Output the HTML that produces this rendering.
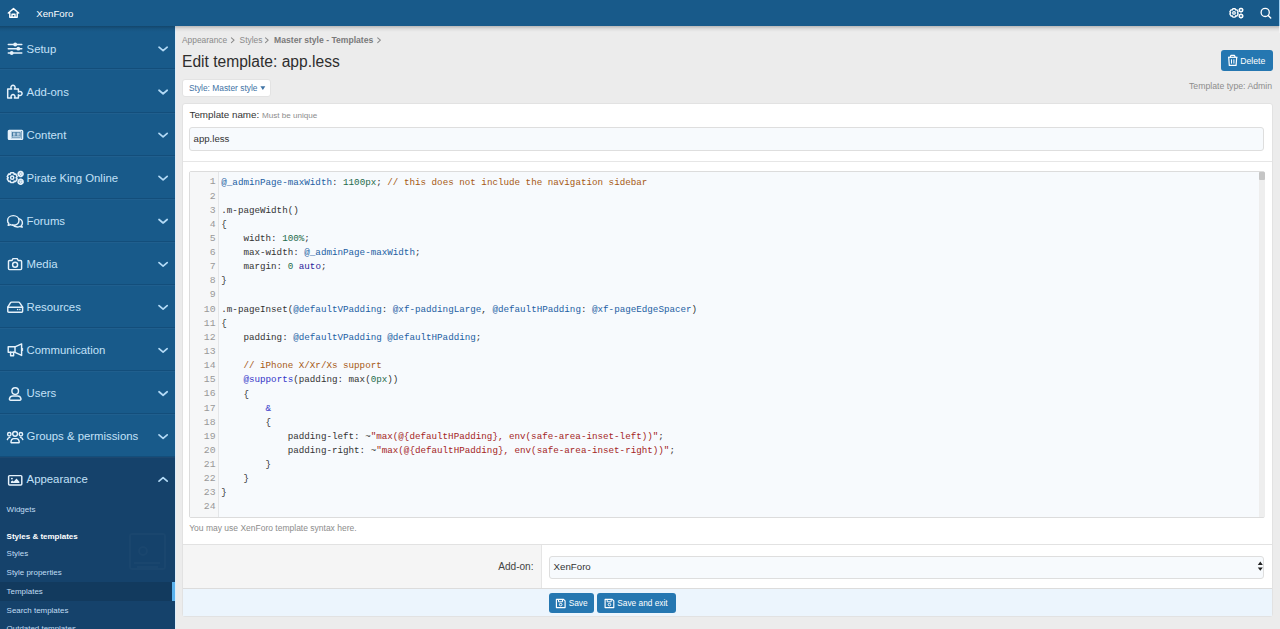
<!DOCTYPE html><html><head><meta charset="utf-8"><title>Edit template: app.less</title><style>
html,body{margin:0;padding:0;width:1280px;height:629px;overflow:hidden;background:#ececec;font-family:"Liberation Sans", sans-serif}
.t{position:absolute;white-space:pre;font-family:"Liberation Sans", sans-serif}.r{position:absolute;box-sizing:border-box}svg{position:absolute;overflow:visible}
.cm{position:absolute;white-space:pre;font-family:"Liberation Mono", monospace;color:#333}.ln{position:absolute;font-family:"Liberation Mono", monospace;color:#999;text-align:right;white-space:pre}
.cm i{font-style:normal;color:#2360a3}.cm b{font-weight:400;color:#1e6b4c}.cm u{text-decoration:none;color:#a65914}.cm s{text-decoration:none;color:#a42424}.cm q{color:#2b219a}.cm q:before,.cm q:after{content:none}.cm em{font-style:normal;color:#3434c8}
</style></head><body>
<div class="r" style="left:0px;top:26px;width:175px;height:603px;background:#185a8a"></div>
<div class="r" style="left:175px;top:26px;width:1px;height:603px;background:#dcedfa"></div>
<div class="r" style="left:0px;top:457px;width:175px;height:172px;background:#15426b"></div>
<div class="r" style="left:0px;top:68.47px;width:175px;height:1px;background:#134e7b"></div>
<div class="r" style="left:0px;top:69.47px;width:175px;height:1px;background:rgba(255,255,255,0.035)"></div>
<div class="r" style="left:0px;top:111.54px;width:175px;height:1px;background:#134e7b"></div>
<div class="r" style="left:0px;top:112.54px;width:175px;height:1px;background:rgba(255,255,255,0.035)"></div>
<div class="r" style="left:0px;top:154.61px;width:175px;height:1px;background:#134e7b"></div>
<div class="r" style="left:0px;top:155.61px;width:175px;height:1px;background:rgba(255,255,255,0.035)"></div>
<div class="r" style="left:0px;top:197.68px;width:175px;height:1px;background:#134e7b"></div>
<div class="r" style="left:0px;top:198.68px;width:175px;height:1px;background:rgba(255,255,255,0.035)"></div>
<div class="r" style="left:0px;top:240.75px;width:175px;height:1px;background:#134e7b"></div>
<div class="r" style="left:0px;top:241.75px;width:175px;height:1px;background:rgba(255,255,255,0.035)"></div>
<div class="r" style="left:0px;top:283.82px;width:175px;height:1px;background:#134e7b"></div>
<div class="r" style="left:0px;top:284.82px;width:175px;height:1px;background:rgba(255,255,255,0.035)"></div>
<div class="r" style="left:0px;top:326.89px;width:175px;height:1px;background:#134e7b"></div>
<div class="r" style="left:0px;top:327.89px;width:175px;height:1px;background:rgba(255,255,255,0.035)"></div>
<div class="r" style="left:0px;top:369.96px;width:175px;height:1px;background:#134e7b"></div>
<div class="r" style="left:0px;top:370.96px;width:175px;height:1px;background:rgba(255,255,255,0.035)"></div>
<div class="r" style="left:0px;top:413.03px;width:175px;height:1px;background:#134e7b"></div>
<div class="r" style="left:0px;top:414.03px;width:175px;height:1px;background:rgba(255,255,255,0.035)"></div>
<div class="r" style="left:0px;top:456.1px;width:175px;height:1px;background:#134e7b"></div>
<div class="r" style="left:0px;top:457.1px;width:175px;height:1px;background:rgba(255,255,255,0.035)"></div>
<div class="t" style="left:26.6px;top:41.77px;font-size:11.35px;line-height:14.19px;color:#c3e1f8;font-weight:400;">Setup</div>
<div class="t" style="left:26.6px;top:84.84px;font-size:11.35px;line-height:14.19px;color:#c3e1f8;font-weight:400;">Add-ons</div>
<div class="t" style="left:26.6px;top:127.91px;font-size:11.35px;line-height:14.19px;color:#c3e1f8;font-weight:400;">Content</div>
<div class="t" style="left:26.6px;top:170.98px;font-size:11.35px;line-height:14.19px;color:#c3e1f8;font-weight:400;">Pirate King Online</div>
<div class="t" style="left:26.6px;top:214.05px;font-size:11.35px;line-height:14.19px;color:#c3e1f8;font-weight:400;">Forums</div>
<div class="t" style="left:26.6px;top:257.12px;font-size:11.35px;line-height:14.19px;color:#c3e1f8;font-weight:400;">Media</div>
<div class="t" style="left:26.6px;top:300.19px;font-size:11.35px;line-height:14.19px;color:#c3e1f8;font-weight:400;">Resources</div>
<div class="t" style="left:26.6px;top:343.26px;font-size:11.35px;line-height:14.19px;color:#c3e1f8;font-weight:400;">Communication</div>
<div class="t" style="left:26.6px;top:386.33px;font-size:11.35px;line-height:14.19px;color:#c3e1f8;font-weight:400;">Users</div>
<div class="t" style="left:26.6px;top:429.40px;font-size:11.35px;line-height:14.19px;color:#c3e1f8;font-weight:400;">Groups &amp; permissions</div>
<div class="t" style="left:26.6px;top:472.47px;font-size:11.35px;line-height:14.19px;color:#c3e1f8;font-weight:400;">Appearance</div>
<div class="r" style="left:0px;top:582px;width:175px;height:19px;background:#123a5e"></div>
<div class="r" style="left:172px;top:582px;width:3px;height:19px;background:#5cb3ee"></div>
<div class="t" style="left:6.6px;top:505.23px;font-size:8.0px;line-height:10.0px;color:#c0ddf3;font-weight:400;">Widgets</div>
<div class="t" style="left:6.6px;top:532.43px;font-size:8.0px;line-height:10.0px;color:#ffffff;font-weight:700;">Styles &amp; templates</div>
<div class="t" style="left:6.6px;top:549.48px;font-size:7.95px;line-height:9.94px;color:#c0ddf3;font-weight:400;">Styles</div>
<div class="t" style="left:6.6px;top:568.18px;font-size:7.95px;line-height:9.94px;color:#c0ddf3;font-weight:400;">Style properties</div>
<div class="t" style="left:6.6px;top:587.08px;font-size:7.95px;line-height:9.94px;color:#c0ddf3;font-weight:400;">Templates</div>
<div class="t" style="left:6.6px;top:605.68px;font-size:7.95px;line-height:9.94px;color:#c0ddf3;font-weight:400;">Search templates</div>
<div class="t" style="left:6.6px;top:624.38px;font-size:7.95px;line-height:9.94px;color:#c0ddf3;font-weight:400;">Outdated templates</div>
<svg style="left:0px;top:0px" width="1" height="1" viewBox="0 0 1 1" ><g fill="none" stroke="rgba(255,255,255,0.025)" stroke-width="2"><rect x="130" y="534" width="35" height="35" rx="2"/><circle cx="143" cy="551" r="4"/><path d="M134 563H160M137 567H158"/></g></svg>
<svg style="left:4px;top:38.00px" width="22" height="22" viewBox="0 0 22 22" fill="none" stroke="#e6f2fb" stroke-width="1.45" stroke-linecap="round" stroke-linejoin="round"><path d="M4.3 6.5H17.8M4.3 10.7H17.8M4.3 15H17.8" stroke-width="1.5"/><circle cx="11.2" cy="6.5" r="1.9" fill="#e6f2fb" stroke="none"/><circle cx="14.3" cy="10.7" r="1.9" fill="#e6f2fb" stroke="none"/><circle cx="7.7" cy="15" r="1.9" fill="#e6f2fb" stroke="none"/></svg>
<svg style="left:4px;top:81.07px" width="22" height="22" viewBox="0 0 22 22" fill="none" stroke="#e6f2fb" stroke-width="1.5" stroke-linecap="round" stroke-linejoin="round"><path d="M3.7 8H7.6A2.1 2.1 0 1 1 10.4 8H14.4V11.1A2.1 2.1 0 1 1 14.4 13.9V17H10.4A2 2 0 1 0 7.6 17H3.7Z"/></svg>
<svg style="left:4px;top:124.14px" width="22" height="22" viewBox="0 0 22 22" fill="none" stroke="#e6f2fb" stroke-width="1.45" stroke-linecap="round" stroke-linejoin="round"><rect x="4.4" y="6.5" width="14.2" height="8.8" rx="0.8" stroke-width="1.4"/><rect x="4.4" y="6.5" width="2.7" height="8.8" fill="#e6f2fb" stroke="none"/><rect x="7.6" y="7.7" width="9.4" height="6.5" stroke-width="1"/><rect x="8.7" y="8.6" width="2.9" height="3.2" fill="#e6f2fb" stroke="none" opacity=".75"/><rect x="12.5" y="8.6" width="3.3" height="3.2" fill="#e6f2fb" stroke="none" opacity=".75"/><path d="M8.7 12.8H15.8" stroke-width="1"/></svg>
<svg style="left:4px;top:167.21px" width="22" height="22" viewBox="0 0 22 22" fill="none" stroke="#e6f2fb" stroke-width="1.5" stroke-linecap="round" stroke-linejoin="round"><path d="M6.03 7.34L6.70 5.83L9.70 5.83L10.37 7.34L10.03 7.14L11.67 6.96L13.17 9.56L12.20 10.89L12.20 10.51L13.17 11.84L11.67 14.44L10.03 14.26L10.37 14.06L9.70 15.57L6.70 15.57L6.03 14.06L6.37 14.26L4.73 14.44L3.23 11.84L4.20 10.51L4.20 10.89L3.23 9.56L4.73 6.96L6.37 7.14Z"/><circle cx="8.2" cy="10.7" r="1.6"/><path d="M15.52 5.22L15.84 4.41L17.36 4.41L17.68 5.22L17.51 5.12L18.37 5.00L19.13 6.32L18.60 7.00L18.60 6.80L19.13 7.48L18.37 8.80L17.51 8.68L17.68 8.58L17.36 9.39L15.84 9.39L15.52 8.58L15.69 8.68L14.83 8.80L14.07 7.48L14.60 6.80L14.60 7.00L14.07 6.32L14.83 5.00L15.69 5.12Z"/><circle cx="16.6" cy="6.9" r="0.6"/><path d="M15.52 13.02L15.84 12.21L17.36 12.21L17.68 13.02L17.51 12.92L18.37 12.80L19.13 14.12L18.60 14.80L18.60 14.60L19.13 15.28L18.37 16.60L17.51 16.48L17.68 16.38L17.36 17.19L15.84 17.19L15.52 16.38L15.69 16.48L14.83 16.60L14.07 15.28L14.60 14.60L14.60 14.80L14.07 14.12L14.83 12.80L15.69 12.92Z"/><circle cx="16.6" cy="14.7" r="0.6"/></svg>
<svg style="left:4px;top:210.28px" width="22" height="22" viewBox="0 0 22 22" fill="none" stroke="#e6f2fb" stroke-width="1.45" stroke-linecap="round" stroke-linejoin="round"><path d="M4.8 13.3C3.8 12.5 3.6 11.4 3.6 10.4C3.6 7.6 6.2 5.6 9.3 5.6C12.4 5.6 15 7.6 15 10.4C15 13.2 12.4 15.2 9.3 15.2C8.3 15.2 7.3 15 6.5 14.6C5.8 15 4.9 15.3 4.1 15.2C4.6 14.7 4.8 14 4.8 13.3Z"/><path d="M14.6 8.6C16.9 9.2 18.4 10.9 18.4 12.9C18.4 13.9 18.1 14.8 17.4 15.4C17.5 16.1 17.8 16.6 18.3 17C17.4 17.1 16.6 16.8 16 16.4C15.2 16.8 14.3 17 13.3 17C11.3 17 9.6 16.2 8.7 14.9"/></svg>
<svg style="left:4px;top:253.35px" width="22" height="22" viewBox="0 0 22 22" fill="none" stroke="#e6f2fb" stroke-width="1.45" stroke-linecap="round" stroke-linejoin="round"><path d="M5.5 7.5H8L9 5.6H13.2L14.2 7.5H16.6C17.2 7.5 17.6 7.9 17.6 8.5V15.6C17.6 16.2 17.2 16.6 16.6 16.6H5.5C4.9 16.6 4.5 16.2 4.5 15.6V8.5C4.5 7.9 4.9 7.5 5.5 7.5Z"/><circle cx="11.1" cy="11.7" r="2.5"/></svg>
<svg style="left:4px;top:296.42px" width="22" height="22" viewBox="0 0 22 22" fill="none" stroke="#e6f2fb" stroke-width="1.45" stroke-linecap="round" stroke-linejoin="round"><path d="M3.8 11.2L6.4 6.8C6.7 6.3 7.1 6.1 7.6 6.1H14.6C15.1 6.1 15.5 6.3 15.8 6.8L18.6 11.2V15.3C18.6 15.8 18.2 16.2 17.7 16.2H4.7C4.2 16.2 3.8 15.8 3.8 15.3Z"/><path d="M3.8 11.2H18.6"/><circle cx="13.6" cy="13.5" r="0.75" fill="#e6f2fb" stroke="none"/><circle cx="15.9" cy="13.5" r="0.75" fill="#e6f2fb" stroke="none"/></svg>
<svg style="left:4px;top:339.49px" width="22" height="22" viewBox="0 0 22 22" fill="none" stroke="#e6f2fb" stroke-width="1.45" stroke-linecap="round" stroke-linejoin="round"><path d="M4.2 7.8H11L17.6 4.9V16.4L11 13.3H4.2Z"/><path d="M11 7.8V13.3"/><path d="M6.6 13.3V16.8H9.6V13.3"/><path d="M18.6 9.4V11.6" stroke-width="1"/></svg>
<svg style="left:4px;top:382.56px" width="22" height="22" viewBox="0 0 22 22" fill="none" stroke="#e6f2fb" stroke-width="1.45" stroke-linecap="round" stroke-linejoin="round"><circle cx="11.2" cy="8.1" r="3.3"/><path d="M6.6 17.2H15.8C16.6 17.2 17.1 16.6 17 15.8C16.6 13.9 15.2 12.9 13.6 12.9H8.8C7.2 12.9 5.8 13.9 5.4 15.8C5.3 16.6 5.8 17.2 6.6 17.2Z"/></svg>
<svg style="left:4px;top:425.63px" width="22" height="22" viewBox="0 0 22 22" fill="none" stroke="#e6f2fb" stroke-width="1.45" stroke-linecap="round" stroke-linejoin="round"><circle cx="11.1" cy="7.8" r="2.4"/><circle cx="5.3" cy="8.2" r="1.7"/><circle cx="16.9" cy="8.2" r="1.7"/><path d="M7.7 16.7H14.5C15 16.7 15.3 16.3 15.2 15.8C15 13.8 14 12.6 12.6 12.6H9.6C8.2 12.6 7.2 13.8 7 15.8C6.9 16.3 7.2 16.7 7.7 16.7Z"/><path d="M3.4 13.6C3.8 12.4 4.6 11.5 5.8 11.4M18.8 13.6C18.4 12.4 17.6 11.5 16.4 11.4"/></svg>
<svg style="left:4px;top:468.70px" width="22" height="22" viewBox="0 0 22 22" fill="none" stroke="#e6f2fb" stroke-width="1.45" stroke-linecap="round" stroke-linejoin="round"><rect x="4.6" y="6.6" width="13.2" height="9.3" rx="1"/><path d="M6.9 14.1V12.4L8.3 11.4L9.8 12.4L12.5 9.6L15.4 12.7V14.1Z" fill="#e6f2fb" stroke="none"/><circle cx="7.9" cy="9.6" r="0.95" fill="#e6f2fb" stroke="none"/></svg>
<svg style="left:0;top:0" width="1" height="1"><path d="M159 47.20L163.1 50.70L167.2 47.20" fill="none" stroke="#b3daf6" stroke-width="1.7" stroke-linecap="round" stroke-linejoin="round"/></svg>
<svg style="left:0;top:0" width="1" height="1"><path d="M159 90.27L163.1 93.77L167.2 90.27" fill="none" stroke="#b3daf6" stroke-width="1.7" stroke-linecap="round" stroke-linejoin="round"/></svg>
<svg style="left:0;top:0" width="1" height="1"><path d="M159 133.34L163.1 136.84L167.2 133.34" fill="none" stroke="#b3daf6" stroke-width="1.7" stroke-linecap="round" stroke-linejoin="round"/></svg>
<svg style="left:0;top:0" width="1" height="1"><path d="M159 176.41L163.1 179.91L167.2 176.41" fill="none" stroke="#b3daf6" stroke-width="1.7" stroke-linecap="round" stroke-linejoin="round"/></svg>
<svg style="left:0;top:0" width="1" height="1"><path d="M159 219.48L163.1 222.98L167.2 219.48" fill="none" stroke="#b3daf6" stroke-width="1.7" stroke-linecap="round" stroke-linejoin="round"/></svg>
<svg style="left:0;top:0" width="1" height="1"><path d="M159 262.55L163.1 266.05L167.2 262.55" fill="none" stroke="#b3daf6" stroke-width="1.7" stroke-linecap="round" stroke-linejoin="round"/></svg>
<svg style="left:0;top:0" width="1" height="1"><path d="M159 305.62L163.1 309.12L167.2 305.62" fill="none" stroke="#b3daf6" stroke-width="1.7" stroke-linecap="round" stroke-linejoin="round"/></svg>
<svg style="left:0;top:0" width="1" height="1"><path d="M159 348.69L163.1 352.19L167.2 348.69" fill="none" stroke="#b3daf6" stroke-width="1.7" stroke-linecap="round" stroke-linejoin="round"/></svg>
<svg style="left:0;top:0" width="1" height="1"><path d="M159 391.76L163.1 395.26L167.2 391.76" fill="none" stroke="#b3daf6" stroke-width="1.7" stroke-linecap="round" stroke-linejoin="round"/></svg>
<svg style="left:0;top:0" width="1" height="1"><path d="M159 434.83L163.1 438.33L167.2 434.83" fill="none" stroke="#b3daf6" stroke-width="1.7" stroke-linecap="round" stroke-linejoin="round"/></svg>
<svg style="left:0;top:0" width="1" height="1"><path d="M159 481.10L163.1 477.60L167.2 481.10" fill="none" stroke="#b3daf6" stroke-width="1.7" stroke-linecap="round" stroke-linejoin="round"/></svg>
<div class="r" style="left:0px;top:0px;width:1280px;height:26px;background:#185a8a"></div>
<div class="r" style="left:0px;top:26px;width:1280px;height:6px;background:linear-gradient(rgba(0,0,0,.22),rgba(0,0,0,.06) 50%,rgba(0,0,0,0))"></div>
<div class="r" style="left:1278.7px;top:26px;width:1.3px;height:7px;background:#f2f2f2"></div>
<div class="r" style="left:1278.7px;top:0px;width:1.3px;height:26px;background:#9fd0f2"></div>
<div class="t" style="left:36.2px;top:7.78px;font-size:9.7px;line-height:12.12px;color:#ffffff;font-weight:400;">XenForo</div>
<svg style="left:0px;top:0px" width="1" height="1" viewBox="0 0 1 1" ><path d="M8.3 13L13.5 8.6L18.7 13M9.8 11.8V17.2H17.2V11.8M12 17.2V14.2H15V17.2" fill="none" stroke="#fff" stroke-width="1.4" stroke-linejoin="round" stroke-linecap="round"/></svg>
<svg style="left:0px;top:0px" width="1" height="1" viewBox="0 0 1 1" ><circle cx="1265.2" cy="12.4" r="4.1" fill="none" stroke="#fff" stroke-width="1.3"/><path d="M1268.2 15.4L1270.7 17.9" stroke="#fff" stroke-width="1.4" stroke-linecap="round"/></svg>
<svg style="left:0px;top:0px" width="1" height="1" viewBox="0 0 1 1" ><g fill="none" stroke="#fff" stroke-width="1.3" stroke-linejoin="round"><path d="M1232.25 9.99L1232.80 8.77L1235.20 8.77L1235.75 9.99L1235.65 9.92L1236.98 9.80L1238.18 11.87L1237.40 12.96L1237.40 12.84L1238.18 13.93L1236.98 16.00L1235.65 15.88L1235.75 15.81L1235.20 17.03L1232.80 17.03L1232.25 15.81L1232.35 15.88L1231.02 16.00L1229.82 13.93L1230.60 12.84L1230.60 12.96L1229.82 11.87L1231.02 9.80L1232.35 9.92Z"/><circle cx="1234.0" cy="12.9" r="1.3"/><path d="M1240.25 8.86L1240.47 8.28L1241.53 8.28L1241.75 8.86L1241.70 8.83L1242.32 8.73L1242.85 9.65L1242.45 10.13L1242.45 10.07L1242.85 10.55L1242.32 11.47L1241.70 11.37L1241.75 11.34L1241.53 11.92L1240.47 11.92L1240.25 11.34L1240.30 11.37L1239.68 11.47L1239.15 10.55L1239.55 10.07L1239.55 10.13L1239.15 9.65L1239.68 8.73L1240.30 8.83Z"/><path d="M1240.25 14.76L1240.47 14.18L1241.53 14.18L1241.75 14.76L1241.70 14.73L1242.32 14.63L1242.85 15.55L1242.45 16.03L1242.45 15.97L1242.85 16.45L1242.32 17.37L1241.70 17.27L1241.75 17.24L1241.53 17.82L1240.47 17.82L1240.25 17.24L1240.30 17.27L1239.68 17.37L1239.15 16.45L1239.55 15.97L1239.55 16.03L1239.15 15.55L1239.68 14.63L1240.30 14.73Z"/></g></svg>
<div class="t" style="left:182px;top:35.04px;font-size:8.4px;line-height:10.5px;color:#8a8a8a;font-weight:400;">Appearance</div>
<div class="t" style="left:239.6px;top:35.04px;font-size:8.4px;line-height:10.5px;color:#8a8a8a;font-weight:400;">Styles</div>
<div class="t" style="left:274.1px;top:34.85px;font-size:8.6px;line-height:10.75px;color:#7a7a7a;font-weight:700;">Master style - Templates</div>
<svg style="left:0px;top:0px" width="1" height="1" viewBox="0 0 1 1" ><path d="M231.4 37.8L234.1 40.2L231.4 42.6" fill="none" stroke="#8a8a8a" stroke-width="1.05" stroke-linecap="round" stroke-linejoin="round"/></svg>
<svg style="left:0px;top:0px" width="1" height="1" viewBox="0 0 1 1" ><path d="M265.5 37.8L268.2 40.2L265.5 42.6" fill="none" stroke="#8a8a8a" stroke-width="1.05" stroke-linecap="round" stroke-linejoin="round"/></svg>
<svg style="left:0px;top:0px" width="1" height="1" viewBox="0 0 1 1" ><path d="M377.7 37.8L380.4 40.2L377.7 42.6" fill="none" stroke="#8a8a8a" stroke-width="1.05" stroke-linecap="round" stroke-linejoin="round"/></svg>
<div class="t" style="left:182px;top:51.54px;font-size:15.6px;line-height:19.5px;color:#2e2e2e;font-weight:400;">Edit template: app.less</div>
<div class="r" style="left:1221px;top:50.2px;width:52px;height:20.4px;background:#2577b1;border-radius:3px"></div>
<svg style="left:0px;top:0px" width="1" height="1" viewBox="0 0 1 1" ><g fill="none" stroke="#fff" stroke-width="1.2" stroke-linejoin="round"><path d="M1228 57.3H1237.4"/><path d="M1230.2 57.3L1231 55.3H1234.4L1235.2 57.3"/><path d="M1228.7 57.3L1229.3 65.4H1236.1L1236.7 57.3"/><path d="M1231.5 59.3V63.6M1233.9 59.3V63.6" stroke-width="1"/></g></svg>
<div class="t" style="left:1240.2px;top:55.95px;font-size:8.7px;line-height:10.88px;color:#ffffff;font-weight:400;">Delete</div>
<div class="t" style="left:1189px;top:80.85px;font-size:8.7px;line-height:10.88px;color:#8c8c8c;font-weight:400;">Template type: Admin</div>
<div class="r" style="left:182.3px;top:79.3px;width:88.8px;height:17.7px;background:#fff;border:1px solid #e3e3e3;border-radius:3px"></div>
<div class="t" style="left:189px;top:83.44px;font-size:8.4px;line-height:10.5px;color:#3f73a5;font-weight:400;">Style: Master style</div>
<svg style="left:0px;top:0px" width="1" height="1" viewBox="0 0 1 1" ><path d="M260.4 86.2H265.3L262.85 90Z" fill="#3f73a5"/></svg>
<div class="r" style="left:181.5px;top:102.8px;width:1091px;height:514.2px;background:#fff;border:1px solid #e2e2e2;border-radius:3px"></div>
<div class="t" style="left:189.5px;top:109.48px;font-size:9.8px;line-height:12.25px;color:#333;font-weight:400;">Template name:</div>
<div class="t" style="left:262px;top:111.13px;font-size:8.1px;line-height:10.12px;color:#8c8c8c;font-weight:400;">Must be unique</div>
<div class="r" style="left:189.3px;top:127.3px;width:1075px;height:23.4px;background:#f7fafd;border:1px solid #dedede;border-radius:3px"></div>
<div class="t" style="left:193.6px;top:133.17px;font-size:9.6px;line-height:12.0px;color:#333;font-weight:400;">app.less</div>
<div class="r" style="left:182.5px;top:161px;width:1089px;height:1px;background:#e6e6e6"></div>
<div class="r" style="left:189.4px;top:171.3px;width:1075.6px;height:346.4px;background:#f7fafd;border:1px solid #dcdcdc;border-radius:2px"></div>
<div class="r" style="left:190.4px;top:172.3px;width:28.6px;height:344.4px;background:#f6f7f8;border-right:1px solid #e4e6e8"></div>
<div class="r" style="left:1259.2px;top:172.3px;width:5.8px;height:344.4px;background:#eeeeee"></div>
<div class="r" style="left:1259.2px;top:172.3px;width:5.8px;height:7.6px;background:#c5c5c5;border-radius:1px"></div>
<div class="t" style="left:189.2px;top:523.44px;font-size:8.5px;line-height:10.62px;color:#8c8c8c;font-weight:400;">You may use XenForo template syntax here.</div>
<div class="r" style="left:182.5px;top:544px;width:1089px;height:1px;background:#e2e2e2"></div>
<div class="r" style="left:182.5px;top:545px;width:359px;height:43.4px;background:#f5f5f5;border-right:1px solid #e5e5e5"></div>
<div class="t" style="left:498.2px;top:560.99px;font-size:10.1px;line-height:12.62px;color:#444;font-weight:400;">Add-on:</div>
<div class="r" style="left:548.9px;top:555.5px;width:715.5px;height:23.1px;background:#f7fafd;border:1px solid #dedede;border-radius:3px"></div>
<div class="t" style="left:553.6px;top:561.38px;font-size:9.7px;line-height:12.12px;color:#333;font-weight:400;">XenForo</div>
<svg style="left:0px;top:0px" width="1" height="1" viewBox="0 0 1 1" ><path d="M1257.8 564.9L1260.3 561.6L1262.8 564.9Z M1257.8 567.4L1260.3 570.7L1262.8 567.4Z" fill="#222"/></svg>
<div class="r" style="left:182.5px;top:588.4px;width:1089px;height:28.1px;background:#ecf5fd;border-top:1px solid #dcdcdc"></div>
<div class="r" style="left:548.6px;top:592.8px;width:45.4px;height:19.9px;background:#2577b1;border-radius:3px"></div>
<div class="r" style="left:597px;top:592.8px;width:78.6px;height:19.9px;background:#2577b1;border-radius:3px"></div>
<svg style="left:0px;top:0px" width="1" height="1" viewBox="0 0 1 1" ><g fill="none" stroke="#fff" stroke-width="1.15" stroke-linejoin="round"><path d="M556.4 599.3H563.5L565.1 600.9V607.6H556.4Z"/><path d="M558.5 599.4V601.8H562.5V599.4" stroke-width="1"/><circle cx="560.6999999999999" cy="604.6" r="1.3" stroke-width="1"/></g></svg>
<svg style="left:0px;top:0px" width="1" height="1" viewBox="0 0 1 1" ><g fill="none" stroke="#fff" stroke-width="1.15" stroke-linejoin="round"><path d="M605.1 599.3H612.2L613.8000000000001 600.9V607.6H605.1Z"/><path d="M607.2 599.4V601.8H611.2V599.4" stroke-width="1"/><circle cx="609.4" cy="604.6" r="1.3" stroke-width="1"/></g></svg>
<div class="t" style="left:568.7px;top:597.93px;font-size:8.3px;line-height:10.38px;color:#fff;font-weight:400;">Save</div>
<div class="t" style="left:617.3px;top:597.93px;font-size:8.3px;line-height:10.38px;color:#fff;font-weight:400;">Save and exit</div>
<div class="ln" style="left:196px;width:19.6px;top:175.43px;font-size:9.8px;line-height:14.13px">1</div>
<div class="cm" style="left:221.3px;top:175.58px;font-size:9.23px;line-height:14.13px"><i>@_adminPage-maxWidth</i>: <b>1100px</b>; <u>// this does not include the navigation sidebar</u></div>
<div class="ln" style="left:196px;width:19.6px;top:189.56px;font-size:9.8px;line-height:14.13px">2</div>
<div class="ln" style="left:196px;width:19.6px;top:203.69px;font-size:9.8px;line-height:14.13px">3</div>
<div class="cm" style="left:221.3px;top:203.84px;font-size:9.23px;line-height:14.13px">.m-pageWidth()</div>
<div class="ln" style="left:196px;width:19.6px;top:217.82px;font-size:9.8px;line-height:14.13px">4</div>
<div class="cm" style="left:221.3px;top:217.97px;font-size:9.23px;line-height:14.13px">{</div>
<div class="ln" style="left:196px;width:19.6px;top:231.95px;font-size:9.8px;line-height:14.13px">5</div>
<div class="cm" style="left:221.3px;top:232.10px;font-size:9.23px;line-height:14.13px">    width: <b>100%</b>;</div>
<div class="ln" style="left:196px;width:19.6px;top:246.08px;font-size:9.8px;line-height:14.13px">6</div>
<div class="cm" style="left:221.3px;top:246.23px;font-size:9.23px;line-height:14.13px">    max-width: <i>@_adminPage-maxWidth</i>;</div>
<div class="ln" style="left:196px;width:19.6px;top:260.21px;font-size:9.8px;line-height:14.13px">7</div>
<div class="cm" style="left:221.3px;top:260.36px;font-size:9.23px;line-height:14.13px">    margin: <b>0</b> <q>auto</q>;</div>
<div class="ln" style="left:196px;width:19.6px;top:274.34px;font-size:9.8px;line-height:14.13px">8</div>
<div class="cm" style="left:221.3px;top:274.49px;font-size:9.23px;line-height:14.13px">}</div>
<div class="ln" style="left:196px;width:19.6px;top:288.47px;font-size:9.8px;line-height:14.13px">9</div>
<div class="ln" style="left:196px;width:19.6px;top:302.60px;font-size:9.8px;line-height:14.13px">10</div>
<div class="cm" style="left:221.3px;top:302.75px;font-size:9.23px;line-height:14.13px">.m-pageInset(<i>@defaultVPadding</i>: <i>@xf-paddingLarge</i>, <i>@defaultHPadding</i>: <i>@xf-pageEdgeSpacer</i>)</div>
<div class="ln" style="left:196px;width:19.6px;top:316.73px;font-size:9.8px;line-height:14.13px">11</div>
<div class="cm" style="left:221.3px;top:316.88px;font-size:9.23px;line-height:14.13px">{</div>
<div class="ln" style="left:196px;width:19.6px;top:330.86px;font-size:9.8px;line-height:14.13px">12</div>
<div class="cm" style="left:221.3px;top:331.01px;font-size:9.23px;line-height:14.13px">    padding: <i>@defaultVPadding</i> <i>@defaultHPadding</i>;</div>
<div class="ln" style="left:196px;width:19.6px;top:344.99px;font-size:9.8px;line-height:14.13px">13</div>
<div class="ln" style="left:196px;width:19.6px;top:359.12px;font-size:9.8px;line-height:14.13px">14</div>
<div class="cm" style="left:221.3px;top:359.27px;font-size:9.23px;line-height:14.13px">    <u>// iPhone X/Xr/Xs support</u></div>
<div class="ln" style="left:196px;width:19.6px;top:373.25px;font-size:9.8px;line-height:14.13px">15</div>
<div class="cm" style="left:221.3px;top:373.40px;font-size:9.23px;line-height:14.13px">    <em>@supports</em>(padding: max(<b>0px</b>))</div>
<div class="ln" style="left:196px;width:19.6px;top:387.38px;font-size:9.8px;line-height:14.13px">16</div>
<div class="cm" style="left:221.3px;top:387.53px;font-size:9.23px;line-height:14.13px">    {</div>
<div class="ln" style="left:196px;width:19.6px;top:401.51px;font-size:9.8px;line-height:14.13px">17</div>
<div class="cm" style="left:221.3px;top:401.66px;font-size:9.23px;line-height:14.13px">        <em>&amp;</em></div>
<div class="ln" style="left:196px;width:19.6px;top:415.64px;font-size:9.8px;line-height:14.13px">18</div>
<div class="cm" style="left:221.3px;top:415.79px;font-size:9.23px;line-height:14.13px">        {</div>
<div class="ln" style="left:196px;width:19.6px;top:429.77px;font-size:9.8px;line-height:14.13px">19</div>
<div class="cm" style="left:221.3px;top:429.92px;font-size:9.23px;line-height:14.13px">            padding-left: ~<s>"max(@{defaultHPadding}, env(safe-area-inset-left))"</s>;</div>
<div class="ln" style="left:196px;width:19.6px;top:443.90px;font-size:9.8px;line-height:14.13px">20</div>
<div class="cm" style="left:221.3px;top:444.05px;font-size:9.23px;line-height:14.13px">            padding-right: ~<s>"max(@{defaultHPadding}, env(safe-area-inset-right))"</s>;</div>
<div class="ln" style="left:196px;width:19.6px;top:458.03px;font-size:9.8px;line-height:14.13px">21</div>
<div class="cm" style="left:221.3px;top:458.18px;font-size:9.23px;line-height:14.13px">        }</div>
<div class="ln" style="left:196px;width:19.6px;top:472.16px;font-size:9.8px;line-height:14.13px">22</div>
<div class="cm" style="left:221.3px;top:472.31px;font-size:9.23px;line-height:14.13px">    }</div>
<div class="ln" style="left:196px;width:19.6px;top:486.29px;font-size:9.8px;line-height:14.13px">23</div>
<div class="cm" style="left:221.3px;top:486.44px;font-size:9.23px;line-height:14.13px">}</div>
<div class="ln" style="left:196px;width:19.6px;top:500.42px;font-size:9.8px;line-height:14.13px">24</div>
</body></html>
